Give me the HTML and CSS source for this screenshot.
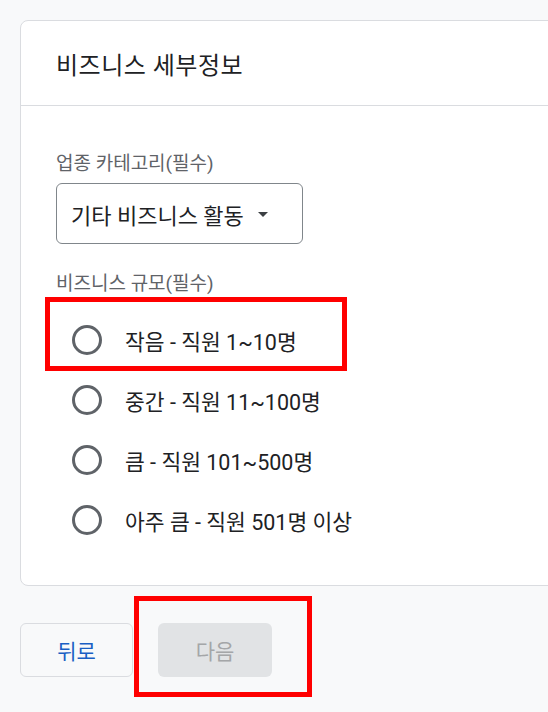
FILE: index.html
```html
<!DOCTYPE html>
<html>
  <head>
    <title>비즈니스 세부정보</title>
    <link rel="stylesheet" href="styles.css">
  </head>
  <body>
    <div class="page">
      <div class="card">
        <div class="card-header">비즈니스 세부정보</div>
        <div class="card-body">
          <div class="field-label">업종 카테고리(필수)</div>
          <div class="select">
            <span>기타 비즈니스 활동</span>
            <span class="caret"></span>
          </div>
          <div class="field-label size-label">비즈니스 규모(필수)</div>
          <div class="options">
            <label class="option"><span class="radio"></span>작음 - 직원 1~10명</label>
            <label class="option"><span class="radio"></span>중간 - 직원 11~100명</label>
            <label class="option"><span class="radio"></span>큼 - 직원 101~500명</label>
            <label class="option"><span class="radio"></span>아주 큼 - 직원 501명 이상</label>
          </div>
        </div>
      </div>
      <div class="actions">
        <button class="btn btn-back">뒤로</button>
        <button class="btn btn-next" disabled>다음</button>
      </div>
    </div>

    <!-- annotation boxes -->
    <div class="mark mark-small"></div>
    <div class="mark mark-next"></div>
  </body>
</html>
```

FILE: styles.css
```css
body {
  margin: 0;
  background: #f8f9fa;
  font-family: Roboto, "Noto Sans CJK KR", sans-serif;
  color: #202124;
  overflow: hidden;
}
.page {
  padding: 20px 0 0 20px;
}
.card {
  width: 600px;
  height: 564px;
  background: #fff;
  border: 1px solid #dadce0;
  border-radius: 8px;
}
.card-header {
  height: 84px;
  display: flex;
  align-items: center;
  padding-left: 35px;
  font-size: 24px;
  letter-spacing: 0.5px;
  border-bottom: 1px solid #dadce0;
}
.card-body {
  padding: 46px 35px 0 35px;
}
.field-label {
  font-size: 19px;
  line-height: 24px;
  color: #5f6368;
}
.select {
  margin-top: 7px;
  height: 59px;
  width: 231px;
  border: 1px solid #80868b;
  border-radius: 6px;
  display: flex;
  align-items: center;
  padding-left: 14px;
  font-size: 22px;
}
.caret {
  margin-left: 14px;
  margin-top: 2px;
  border-left: 5px solid transparent;
  border-right: 5px solid transparent;
  border-top: 5px solid #3c4043;
}
.size-label {
  margin-top: 28px;
}
.options {
  margin-top: 14px;
}
.option {
  height: 60px;
  display: flex;
  align-items: center;
  font-size: 21.5px;
  padding-left: 16px;
}
.radio {
  width: 24px;
  height: 24px;
  border: 3px solid #5f6368;
  border-radius: 50%;
  margin-right: 23px;
}
.actions {
  display: flex;
  gap: 25px;
  margin-top: 37px;
}
.btn {
  height: 54px;
  border-radius: 6px;
  font-family: Roboto, "Noto Sans CJK KR", sans-serif;
  font-size: 21px;
}
.btn-back {
  width: 113px;
  background: #f8f9fa;
  border: 1px solid #dadce0;
  color: #1a5fc4;
}
.btn-next {
  width: 114px;
  background: #e1e3e5;
  border: none;
  color: #a4a6a8;
}
.mark {
  position: absolute;
  border: 5px solid #f00;
}
.mark-small {
  left: 45px;
  top: 297px;
  width: 292px;
  height: 64px;
}
.mark-next {
  left: 134px;
  top: 596px;
  width: 168px;
  height: 91px;
}
```
